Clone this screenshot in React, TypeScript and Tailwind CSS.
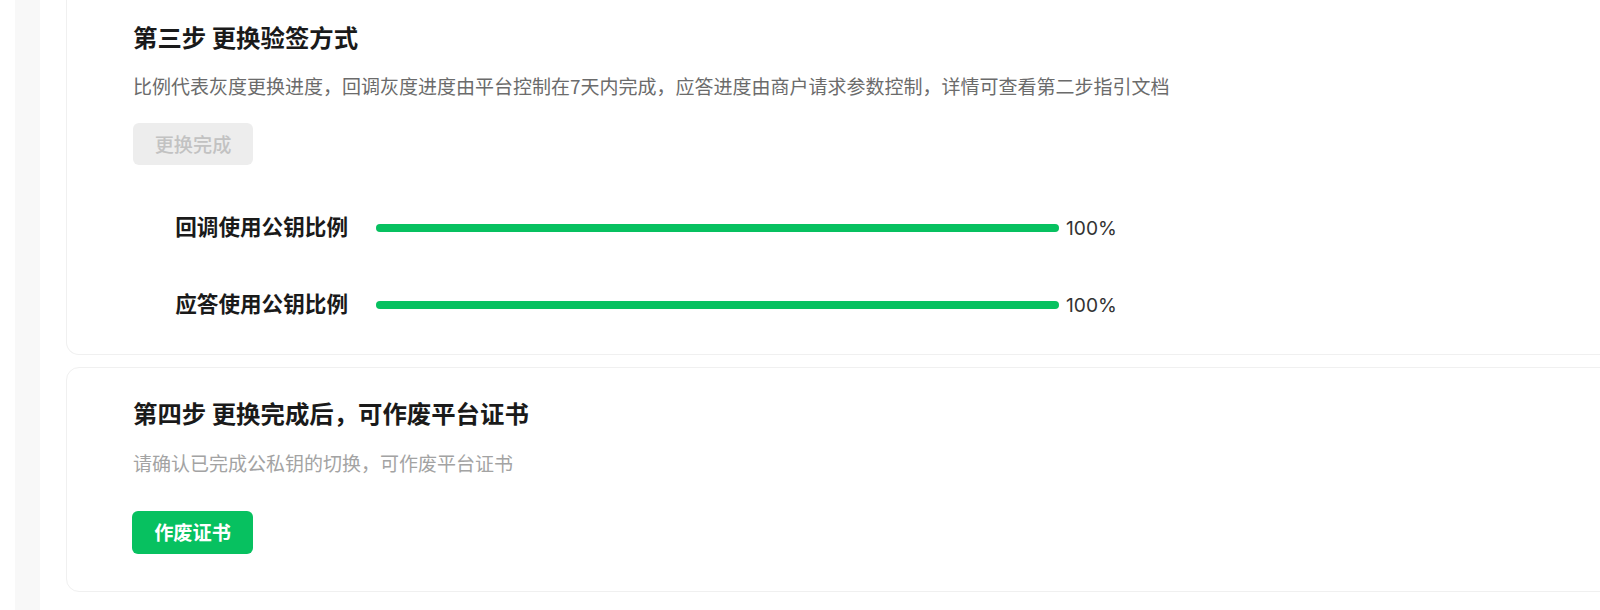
import React from "react";

const font = { fontFamily: '"Noto Sans CJK SC", "Noto Sans", sans-serif' };

function Row({ label, value }: { label: string; value: number }) {
  return (
    <div className="flex h-[40px] items-center">
      <div className="w-[215px] text-right text-[21.6px] font-bold leading-[40px] text-[#1a1a1a] -mt-[5px]">
        {label}
      </div>
      <div className="ml-[28px] h-[8px] w-[683px] rounded-full bg-[#ebebeb]">
        <div className="h-full rounded-full bg-[#07c160]" style={{ width: `${value}%` }} />
      </div>
      <div className="ml-[7px] text-[19.2px] leading-[40px] text-[#333333]" style={{ fontFamily: 'Inter, "Noto Sans", sans-serif' }}>
        {value}%
      </div>
    </div>
  );
}

export default function App() {
  return (
    <div className="flex h-[610px] w-[1600px] overflow-hidden bg-white" style={font}>
      <div className="w-[15px] shrink-0 bg-white" />
      <div className="w-[25px] shrink-0 bg-[#f8f8f8]" />
      <div className="flex min-w-0 flex-1 flex-col gap-[12px] overflow-hidden pl-[26px]">
        <div className="-mr-[40px] rounded-b-[13px] border border-t-0 border-[#f0f0f0] pb-[29px] pl-[66px] pt-[21px]">
          <div className="text-[24.4px] font-bold leading-[32px] text-[#1a1a1a]">第三步 更换验签方式</div>
          <div className="mt-[19px] text-[19px] leading-[28px] text-[#6b6b6b]">
            比例代表灰度更换进度，回调灰度进度由平台控制在7天内完成，应答进度由商户请求参数控制，详情可查看第二步指引文档
          </div>
          <button className="mt-[23px] flex h-[42px] w-[120px] items-center justify-center rounded-[6px] bg-[#ededed] text-[19.2px] font-medium text-[#c2c2c2]">
            更换完成
          </button>
          <div className="mt-[43px] flex flex-col gap-[37px]">
            <Row label="回调使用公钥比例" value={100} />
            <Row label="应答使用公钥比例" value={100} />
          </div>
        </div>
        <div className="-mr-[40px] rounded-[13px] border border-[#f0f0f0] pb-[37px] pl-[66px] pt-[29px]">
          <div className="text-[24.4px] font-bold leading-[32px] text-[#1a1a1a]">第四步 更换完成后，可作废平台证书</div>
          <div className="mt-[20px] text-[19px] leading-[28px] text-[#a3a3a3]">
            请确认已完成公私钥的切换，可作废平台证书
          </div>
          <button className="mt-[34px] flex h-[43px] w-[121px] -ml-[1px] items-center justify-center rounded-[6px] bg-[#07c160] text-[19.2px] font-bold text-white">
            作废证书
          </button>
        </div>
      </div>
    </div>
  );
}
